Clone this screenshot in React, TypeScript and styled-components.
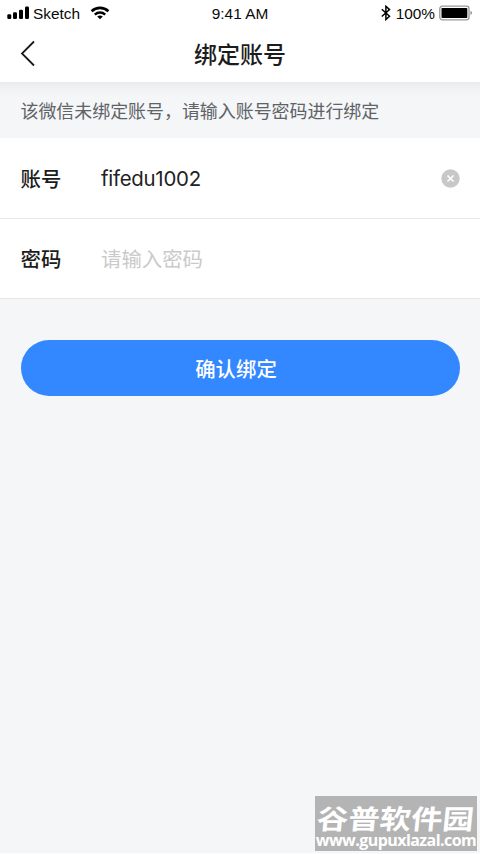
import React from "react";
import styled, { createGlobalStyle } from "styled-components";

const GlobalStyle = createGlobalStyle`
  * { box-sizing: border-box; }
  body { margin: 0; background: #f4f6f8; }
  button, input { font: inherit; border: 0; padding: 0; margin: 0; background: none; }
`;

const Screen = styled.main`
  position: relative;
  display: flex;
  flex-direction: column;
  width: 480px;
  height: 854px;
  overflow: hidden;
  background: #f4f6f8;
  border-bottom: 1px solid #fbfcfd;
  font-family: Inter, "Noto Sans CJK SC", sans-serif;
  color: #1c1c1c;
`;

const Header = styled.header`
  background: #fff;
  height: 82px;
  flex: none;
`;

const StatusBar = styled.div`
  display: grid;
  grid-template-columns: 1fr auto 1fr;
  align-items: center;
  height: 26px;
  padding: 0 7px;
  font-family: "Liberation Sans", Arial, sans-serif;
  color: #0a0a0a;
`;

const StatusGroup = styled.div<{ $end?: boolean }>`
  display: flex;
  align-items: center;
  justify-content: ${(p) => (p.$end ? "flex-end" : "flex-start")};
  svg { display: block; flex: none; }
`;

const StatusText = styled.span<{ $left?: number; $right?: number }>`
  margin-left: ${(p) => p.$left ?? 0}px;
  margin-right: ${(p) => p.$right ?? 0}px;
  font-size: 15.4px;
  padding-top: 1px;
  line-height: 25px;
`;

const NavBar = styled.nav`
  display: grid;
  grid-template-columns: 60px 1fr 60px;
  height: 56px;
  align-items: center;
`;

const BackButton = styled.button`
  display: flex;
  padding-left: 20px;
  svg { display: block; }
`;

const Title = styled.h1`
  margin: 0;
  padding-top: 2px;
  text-align: center;
  font-size: 23px;
  font-weight: 500;
  line-height: 54px;
`;

const Notice = styled.p`
  margin: 0;
  flex: none;
  height: 56px;
  padding: 1px 20.5px 0;
  font-size: 17.95px;
  line-height: 57px;
  color: #606266;
  white-space: nowrap;
  background: linear-gradient(#e9eaeb, #f0f1f2 6px, #f4f6f8 16px);
`;

const Form = styled.form`
  display: flex;
  flex-direction: column;
`;

const Field = styled.label`
  display: flex;
  align-items: center;
  height: 80.5px;
  padding: 0 20px 0 20.5px;
  background: #fff;
  border-bottom: 1px solid #e8e8e8;
`;

const FieldName = styled.span`
  width: 80.5px;
  font-size: 20.4px;
  font-weight: 500;
`;

const FieldInput = styled.input`
  flex: 1;
  min-width: 0;
  height: 40px;
  padding-top: 1px;
  outline: none;
  font-size: 20.4px;
  letter-spacing: -0.25px;
  color: #222;
  &:placeholder-shown { padding-top: 3px; }
  &::placeholder { color: #cacaca; opacity: 1; letter-spacing: 0; }
`;

const ClearButton = styled.button`
  display: flex;
  padding-top: 2px;
`;

const SubmitButton = styled.button`
  height: 56px;
  margin: 41px 20.5px 0;
  padding: 0 8px 1px 0;
  border-radius: 28px;
  background: #3388ff;
  color: #fff;
  font-size: 20.4px;
  font-weight: 500;
`;

const Watermark = styled.div`
  position: absolute;
  left: 315px;
  top: 796px;
  width: 162px;
  height: 55px;
  background: #b4b4b4;
  color: #fff;
  text-align: center;
  white-space: nowrap;
`;

const WatermarkName = styled.div`
  height: 36px;
  font: 700 31.4px/44px "Noto Sans CJK SC", sans-serif;
  transform: scaleY(0.86) skewX(-5deg);
`;

const WatermarkUrl = styled.div`
  font: 700 16px/17px "Open Sans", sans-serif;
  letter-spacing: -0.55px;
`;

const WifiIcon = styled.svg`
  margin-left: 10px;
`;

export default function App() {
  return (
    <Screen>
      <GlobalStyle />
      <Header>
        <StatusBar>
          <StatusGroup>
            <svg width="22" height="14" viewBox="0 0 22 14" fill="#000">
              <rect x="0.3" y="8.3" width="4" height="4.7" rx="1.3" />
              <rect x="6" y="6.3" width="4" height="6.7" rx="1.3" />
              <rect x="12" y="3.7" width="4" height="9.3" rx="1.3" />
              <rect x="18" y="0.5" width="4" height="12.5" rx="1.3" />
            </svg>
            <StatusText $left={4}>Sketch</StatusText>
            <WifiIcon width="20" height="14" viewBox="0 0 20 14" fill="none" stroke="#000">
              <path d="M1.6 5.2C6.3 .7 13.7 .7 18.4 5.2" strokeWidth="2.6" />
              <path d="M4.8 8.6C7.8 5.8 12.2 5.8 15.2 8.6" strokeWidth="2.4" />
              <path d="M10 13.2 7.2 10.5Q10 8.4 12.8 10.5Z" fill="#000" stroke="none" />
            </WifiIcon>
          </StatusGroup>
          <StatusText>9:41 AM</StatusText>
          <StatusGroup $end>
            <svg width="10" height="16" viewBox="0 0 10 16" fill="none" stroke="#000" strokeWidth="1.5">
              <path d="M.8 4.2 8.5 11.2 4.9 14.5V1.3L8.5 4.6.8 11.5" />
            </svg>
            <StatusText $left={5} $right={4}>100%</StatusText>
            <svg width="34" height="16" viewBox="0 0 34 16">
              <rect x=".8" y="1.2" width="29.2" height="13.6" rx="2.5" fill="#fff" stroke="#999" strokeWidth="1.3" />
              <rect x="2.5" y="3" width="25.8" height="10" rx=".8" fill="#000" />
              <path d="M31.5 5.8Q34.5 8 31.5 10.2Z" fill="#888" />
            </svg>
          </StatusGroup>
        </StatusBar>
        <NavBar>
          <BackButton aria-label="返回">
            <svg width="16" height="28" viewBox="0 0 16 28" fill="none" stroke="#1a1a1a" strokeWidth="1.8">
              <path d="M14 1.5 2 13.5 14 25.5" />
            </svg>
          </BackButton>
          <Title>绑定账号</Title>
        </NavBar>
      </Header>
      <Notice>该微信未绑定账号，请输入账号密码进行绑定</Notice>
      <Form>
        <Field>
          <FieldName>账号</FieldName>
          <FieldInput defaultValue="fifedu1002" />
          <ClearButton type="button" aria-label="清除">
            <svg width="19" height="19" viewBox="0 0 19 19">
              <circle cx="9.5" cy="9.5" r="9.2" fill="#c8c8c8" />
              <path d="M6.5 6.5l6 6m0-6l-6 6" stroke="#fff" strokeWidth="1.7" />
            </svg>
          </ClearButton>
        </Field>
        <Field>
          <FieldName>密码</FieldName>
          <FieldInput type="password" placeholder="请输入密码" />
        </Field>
        <SubmitButton type="button">确认绑定</SubmitButton>
      </Form>
      <Watermark>
        <WatermarkName>谷普软件园</WatermarkName>
        <WatermarkUrl>www.gupuxlazal.com</WatermarkUrl>
      </Watermark>
    </Screen>
  );
}
